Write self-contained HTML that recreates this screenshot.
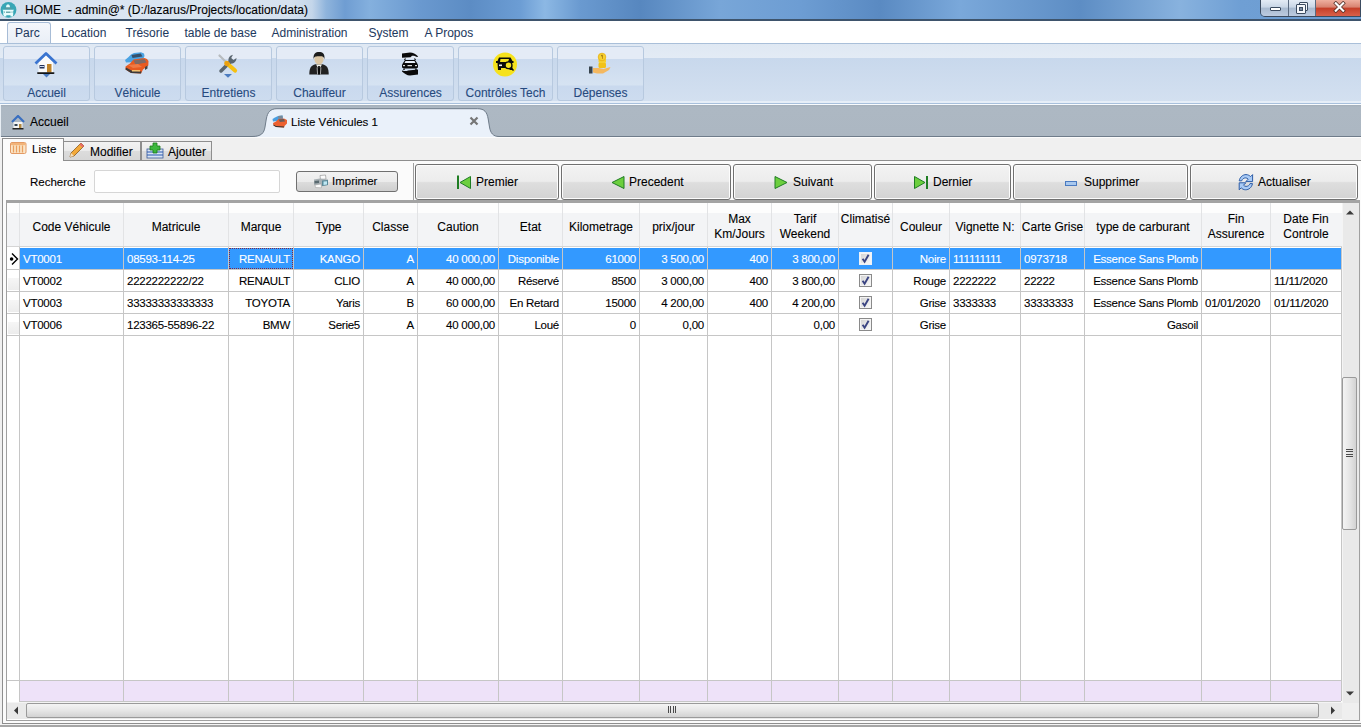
<!DOCTYPE html>
<html><head><meta charset="utf-8">
<style>
*{margin:0;padding:0;box-sizing:border-box}
html,body{width:1361px;height:727px;overflow:hidden;background:#f0f0f0;font-family:"Liberation Sans",sans-serif;font-size:11.5px;color:#000;-webkit-text-stroke:0.1px}
.a{position:absolute}
.t{position:absolute;white-space:nowrap;line-height:14px}
/* title bar */
#title{left:0;top:0;width:1361px;height:21px;background:linear-gradient(90deg,#d2dfec 0px,#dbe6f2 120px,#d6e2ef 290px,#c4d6ea 312px,#8fb4dc 326px,#6f9dd2 345px,#84b0de 370px,#6a99cf 420px,#5c8cc4 470px,#6c9dd4 520px,#8cb8e4 545px,#6a9ad0 580px,#5787bf 640px,#78a6d8 720px,#6d9dd3 800px,#5a8ac2 880px,#7aa8da 960px,#5d8dc4 1080px,#88b2de 1180px,#6f9fd4 1240px,#6b9bd0 1361px)}
#title .line{left:0;top:19px;width:1361px;height:2px;background:#3e546c}
#menu{left:0;top:21px;width:1361px;height:23px;background:#fff}
.mi{position:absolute;top:5px;font-size:12px;color:#1e3a60;line-height:14px;-webkit-text-stroke:0.05px}
#tb{left:0;top:44px;width:1361px;height:61px;background:linear-gradient(#dfe8f3 0,#e3ebf5 14px,#c8d8ec 14px,#d3e0f0 57px,#e6eef8 57px,#e6eef8 59px,#a8c0dc 59px,#a8c0dc 60px,#f8fbfe 60px)}
#tb .topline{left:0;top:-1px;width:1361px;height:1px;background:#a9bfd9}
.btn{position:absolute;top:2px;height:55px;border:1px solid #b7c9df;border-radius:3px;background:linear-gradient(#e4ebf6 0,#e4ebf6 12px,#cbdaee 12px,#d6e3f2 38px,#c9d9ee 39px,#cddcef 54px)}
.btn .lbl{position:absolute;left:0;right:0;top:39px;text-align:center;font-size:12px;color:#274a7e;line-height:14px}
.btn svg{position:absolute}
#tabs{left:0;top:105px;width:1361px;height:32px;background:linear-gradient(#a4afba 0,#adb8c3 2px,#acb7c2 100%);border-bottom:1px solid #6f7c8a}
#page{left:0;top:137px;width:1361px;height:590px;background:#f0f0f0}
.nb{border:1px solid #707070;border-radius:3px;background:linear-gradient(#f2f2f2 0,#ebebeb 50%,#dddddd 51%,#cfcfcf 100%)}

.hd{position:absolute;text-align:center;font-size:12px;line-height:15px;white-space:nowrap}
.cl,.cr,.cc{position:absolute;font-size:11.5px;letter-spacing:-0.25px;line-height:15px;white-space:nowrap}
.cl{text-align:left;padding-left:3px}
.cr{text-align:right;padding-right:3px}
.chk{width:12px;height:12px;border:1px solid #8e8f8f;background:linear-gradient(135deg,#d8d8d8,#f6f6f6)}
.chk:after{content:"";position:absolute;left:3.5px;top:0.5px;width:3px;height:7px;border:solid #3a4878;border-width:0 1.6px 1.6px 0;transform:rotate(35deg)}
.nbt{position:absolute;top:164px;height:36px;border:1px solid #707070;border-radius:3px;background:linear-gradient(#f3f3f3 0,#ececec 48%,#dedede 52%,#d3d3d3 100%);box-shadow:inset 0 0 0 1px #fcfcfc}
.nbt span{position:absolute;top:10px;font-size:12px;line-height:15px;white-space:nowrap}
</style></head><body>
<div id="title" class="a">
  <svg class="a" style="left:0;top:1px" width="18" height="18" viewBox="0 0 18 18"><circle cx="8.5" cy="8.8" r="7.9" fill="#38a6b6"/><path d="M6 6.5 C6 4 7 3.5 8 3.5 C9 3.5 10 4 10 6.5 Z" fill="#e8fcfc"/><path d="M4.5 8.3 L5.5 6.5 L11 6.5 L12 8.3 Z" fill="#5a9aa0"/><path d="M2.5 8.8 L14 8.8 L13.2 10 L13.2 14.2 L3.3 14.2 L3.3 10 Z" fill="#e8fcfc"/><rect x="6" y="10.5" width="4.5" height="1.5" fill="#6aa8ac"/><rect x="4" y="10.5" width="1" height="1.2" fill="#6aa8ac"/><rect x="11.5" y="10.5" width="1" height="1.2" fill="#6aa8ac"/><rect x="3.8" y="14" width="2.5" height="1.5" fill="#e8fcfc"/><rect x="10.5" y="14" width="2.5" height="1.5" fill="#e8fcfc"/></svg>
  <div class="t" style="left:25px;top:3px;font-size:12px;color:#000">HOME&nbsp; - admin@* (D:/lazarus/Projects/location/data)</div>
  <div class="line a"></div>
  <div class="a" style="left:1260px;top:0;width:101px;height:17px;border:1px solid #3b4b60;border-top:none;border-radius:0 0 0 5px;overflow:hidden">
    <div class="a" style="left:0;top:0;width:28px;height:16px;background:linear-gradient(#e3ebf5,#c9d6e6 45%,#a8bad0 50%,#bccbe0);border-right:1px solid #5a6a80"></div>
    <div class="a" style="left:28px;top:0;width:27px;height:16px;background:linear-gradient(#e3ebf5,#c9d6e6 45%,#a8bad0 50%,#bccbe0);border-right:1px solid #5a6a80"></div>
    <div class="a" style="left:55px;top:0;width:46px;height:16px;background:linear-gradient(#eeb0a0,#d88270 45%,#c43e28 50%,#d8604a)"></div>
    <div class="a" style="left:9px;top:7px;width:11px;height:4px;background:#fff;border:1px solid #3b4b60;border-radius:1px"></div>
    <div class="a" style="left:38px;top:2px;width:9px;height:9px;border:1px solid #3b4b60;background:#f4f6fa;border-radius:1px"></div>
    <div class="a" style="left:35px;top:4px;width:10px;height:10px;border:1px solid #3b4b60;background:#f4f6fa;border-radius:1px"></div>
    <div class="a" style="left:38px;top:7px;width:4px;height:4px;border:1px solid #3b4b60;background:#7a8aa0"></div>
    <svg class="a" style="left:72px;top:1px" width="13" height="12" viewBox="0 0 13 12"><path d="M2.8 2.3 L10.2 9.7 M10.2 2.3 L2.8 9.7" stroke="#4a2a22" stroke-width="3.6" stroke-linecap="square"/><path d="M2.8 2.3 L10.2 9.7 M10.2 2.3 L2.8 9.7" stroke="#fff" stroke-width="2.2" stroke-linecap="square"/></svg>
  </div>
</div>
<div id="menu" class="a">
  <div class="a" style="left:7px;top:1px;width:44px;height:22px;background:linear-gradient(#f4f7fb,#e9eef6);border:1px solid #a7bcd6;border-bottom:none;border-radius:3px 3px 0 0"></div>
  <div class="mi" style="left:15px">Parc</div>
  <div class="mi" style="left:61px">Location</div>
  <div class="mi" style="left:125.5px">Trésorie</div>
  <div class="mi" style="left:184.5px">table de base</div>
  <div class="mi" style="left:271.5px">Administration</div>
  <div class="mi" style="left:368.5px">System</div>
  <div class="mi" style="left:424.5px">A Propos</div>
</div>
<div id="tb" class="a">
  <div class="topline a"></div>
  <div class="btn" style="left:3px;width:87px"><svg class="a" style="left:26px;top:1px" width="32" height="32" viewBox="0 0 32 32"><path d="M8.5 14 L16 7.5 L23 14 V24.5 H8.5 Z" fill="#fbfbfb"/><path d="M5.5 15.5 L16 5.5 L26.5 15.5" fill="none" stroke="#3a74d0" stroke-width="2.8" stroke-linejoin="round"/><rect x="9.5" y="17" width="5" height="3.5" fill="#24325a"/><rect x="10" y="18" width="4" height="1" fill="#c8d8f0"/><rect x="17" y="16" width="4.5" height="8.5" fill="#c0842a"/><rect x="7" y="24.3" width="17.5" height="1.6" rx="0.8" fill="#151515"/><path d="M13 26 H20 L16.5 29.5 Z" fill="#4c7cc0"/></svg><div class="lbl">Accueil</div></div>
  <div class="btn" style="left:94px;width:87px"><svg class="a" style="left:26px;top:1px" width="32" height="32" viewBox="0 0 32 32"><path d="M4 12 L7 9.5 L10 6.5 L13 5 L20 4.2 L23 5.5 L23.5 8 L22.5 10.5 L15 14 L5 14.5 Z" fill="#4ba3e3"/><path d="M10.5 7 L19.8 5.5 L21.5 8.5 L11.5 10 Z" fill="#36506a"/><path d="M4.5 18.5 L9 15.5 L12.5 11.5 L23.5 10 L26 11 L27.5 13 L27.3 17.5 L22 21.5 L20 25.5 L10 25 L4.5 21.5 Z" fill="#e85a20"/><path d="M12.5 12.5 L23.5 11 L25.5 14.5 L14.5 16.5 Z" fill="#7e6a66"/><path d="M7 17 L17 16 L21 19 L12 20 Z" fill="#f07a44"/><path d="M4.5 21.5 L10 25 L20 25.5 L20.5 23.5 L10.5 22.5 L5 19.5 Z" fill="#3a3a3a"/><rect x="11" y="22" width="8" height="1.5" fill="#f2c070"/><path d="M24 19 L26.5 17.5 L26.5 20.5 L24 22 Z" fill="#444"/></svg><div class="lbl">Véhicule</div></div>
  <div class="btn" style="left:185px;width:87px"><svg class="a" style="left:26px;top:1px" width="32" height="32" viewBox="0 0 32 32"><path d="M7.5 7.5 L14.5 14.5" stroke="#b8bcc0" stroke-width="2.2" stroke-linecap="round"/><path d="M9 23 L18 14" stroke="#5a6670" stroke-width="3.5" stroke-linecap="round"/><path d="M17 15 C15.5 11.5 17 7.5 21 6.8 L19.2 10 L21.5 12 L24.5 10 C24.5 13.5 21.5 16 18.5 15.5 Z" fill="#5a6670"/><path d="M14.5 15 L23 22.5" stroke="#f6c010" stroke-width="4.2" stroke-linecap="round"/><circle cx="15" cy="15.5" r="2.6" fill="#eba010"/><path d="M12 26 H20 L16 29.8 Z" fill="#4c7cc0"/></svg><div class="lbl">Entretiens</div></div>
  <div class="btn" style="left:276px;width:87px"><svg class="a" style="left:26px;top:1px" width="32" height="32" viewBox="0 0 32 32"><path d="M6.3 26.5 C6.3 20 8 17.5 12.5 16.3 L19.5 16.3 C24 17.5 25.7 20 25.7 26.5 Z" fill="#222"/><path d="M13 16.5 L16 21.5 L19 16.5 Z" fill="#f2f2ec"/><path d="M15.2 18 L16.8 18 L17.3 26.5 L14.7 26.5 Z" fill="#080808"/><path d="M14.1 19.5 L14.6 26.5 M17.9 19.5 L17.4 26.5" stroke="#e0e0e0" stroke-width="0.7"/><ellipse cx="16" cy="11.3" rx="4.6" ry="5.3" fill="#dbc6a4"/><path d="M10.6 11.5 C10 5.5 12.8 4 16 4 C19.5 4 22.2 5.5 21.4 11.5 C21 8.8 19.8 8.2 16 8.3 C12.2 8.2 11 8.8 10.6 11.5 Z" fill="#1c1c1c"/></svg><div class="lbl">Chauffeur</div></div>
  <div class="btn" style="left:367px;width:87px"><svg class="a" style="left:26px;top:1px" width="32" height="32" viewBox="0 0 32 32"><path d="M8 5.5 L16 4.5 C19 4.5 21.5 5.8 24.2 8.5 L23 9 C21 8 19.5 7.5 18 7.8 L16.5 9.2 L8 9.8 Z" fill="#0a0a0a"/><path d="M10.5 12 L11.5 10.5 M20.5 10.5 L21.5 12" stroke="#0a0a0a" stroke-width="1.2"/><path d="M9 15 L11 12 L21 12 L23 15 L24 17 L24 19.5 L22 20.5 L10 20.5 L8 19.5 L8 17 Z" fill="#0a0a0a"/><path d="M11.5 13 L20.5 13 L21.5 15 L10.5 15 Z" fill="#e8eef8"/><rect x="9" y="17" width="2" height="1.2" fill="#ddd"/><rect x="13.5" y="17" width="4.5" height="1.2" fill="#ddd"/><rect x="21" y="17" width="2" height="1.2" fill="#ddd"/><path d="M10 20.5 L10 22 M22 20.5 L22 22" stroke="#0a0a0a" stroke-width="1.4"/><path d="M8 22.5 C10.5 23 12.5 23.5 14 22.5 L24 21.5 L24 26.5 L16 27.5 C13 27.5 10.5 25.5 8 23.5 Z" fill="#0a0a0a"/></svg><div class="lbl">Assurences</div></div>
  <div class="btn" style="left:458px;width:95px"><svg class="a" style="left:30px;top:1px" width="32" height="32" viewBox="0 0 32 32"><circle cx="16" cy="16.5" r="12" fill="#f6e21c"/><path d="M10 9.5 L21.5 9.5 L23.5 13 L24.5 13 L24.5 15 L23 15 L23.5 22 L20.5 22 L20.5 20 L12 20 L12 22 L9 22 L8.5 15 L7 15 L7 13 L8.5 13 Z" fill="#0a0a0a"/><path d="M11.5 11 L20 11 L19 14 L11 14 Z" fill="#f6e21c"/><rect x="10" y="16.5" width="3" height="1.6" fill="#eee"/><circle cx="19.5" cy="17.3" r="3.4" fill="#f6e21c" stroke="#0a0a0a" stroke-width="1.3"/><path d="M22 19.8 L24.5 22.5" stroke="#0a0a0a" stroke-width="1.5"/></svg><div class="lbl">Contrôles Tech</div></div>
  <div class="btn" style="left:557px;width:87px"><svg class="a" style="left:26px;top:1px" width="32" height="32" viewBox="0 0 32 32"><rect x="5" y="18.5" width="3.5" height="7" fill="#38444e"/><path d="M9 20 L15 20 L19.5 21 L26.5 19 L25 22 L19 25.5 L13 25.5 L9 24.5 Z" fill="#f4b860"/><rect x="14.5" y="14.5" width="7.5" height="5.5" rx="1.5" fill="#f2c218"/><rect x="14.5" y="10.5" width="7.5" height="4.5" rx="1.5" fill="#f6d030"/><circle cx="18" cy="9" r="3.8" fill="#f6d030" stroke="#e8b010" stroke-width="0.8"/><path d="M17.5 7 L18.5 7 L18.5 11" stroke="#c89010" stroke-width="0.8"/></svg><div class="lbl">Dépenses</div></div>
</div>
<div id="tabs" class="a">
  <div class="a" style="left:0;top:0;width:1px;height:32px;background:#e8eef4"></div>
  <svg class="a" style="left:11px;top:10px" width="14" height="15" viewBox="0 0 14 15"><path d="M1 7 L7 1 L13 7" fill="none" stroke="#3a6fc0" stroke-width="2.2"/><rect x="2.5" y="7" width="9" height="6" fill="#f4f4f4"/><rect x="3.5" y="9" width="3" height="2" fill="#345"/><rect x="8" y="9" width="2.5" height="4" fill="#b08840"/><rect x="1.5" y="13" width="11" height="1.5" fill="#222"/></svg>
  <div class="t" style="left:30px;top:10px;font-size:12px">Accueil</div>
  <svg class="a" style="left:240px;top:0" width="270" height="32" viewBox="0 0 270 32"><path d="M0 32 L0 31.5 L12 31.5 C21.5 31.5 24 28 25 22 L26.3 14 C27.5 7 30.5 3.7 37 3.7 L237.5 3.7 C244.5 3.7 247 7 248.2 14 L249.5 22 C250.5 28 253 31.5 259 31.5 L270 31.5 L270 32 Z" fill="#eaf1fa"/><path d="M0 31.5 L12 31.5 C21.5 31.5 24 28 25 22 L26.3 14 C27.5 7 30.5 3.7 37 3.7 L237.5 3.7 C244.5 3.7 247 7 248.2 14 L249.5 22 C250.5 28 253 31.5 259 31.5 L270 31.5" fill="none" stroke="#6f7c8a" stroke-width="1"/></svg>
  <svg class="a" style="left:272px;top:9px" width="16" height="16" viewBox="0 0 16 16"><path d="M0.5 5 L3 3.5 L6 2 L10.5 1.5 L11 5 L6 7 L1 7.5 Z" fill="#4a9ee0"/><path d="M6 2 L10.5 1.5 L10.8 4.5 L6.5 5 Z" fill="#7a8a98"/><path d="M1 9 L4 7.5 L6.5 5 L12 4.5 L15 6 L15 9.5 L12.5 12 L12 13.5 L4 13 L1.5 11.5 Z" fill="#ec6030"/><path d="M6.5 5.5 L12 5 L13 7.5 L8 8 Z" fill="#6a5a58"/><path d="M1.5 11.5 L4 13 L12 13.5 L12.3 12.5 L4 12 L1.5 10.5 Z" fill="#333"/></svg>
  <div class="t" style="left:291px;top:10px;font-size:11.5px">Liste Véhicules 1</div>
  <svg class="a" style="left:469px;top:11px" width="10" height="10" viewBox="0 0 10 10"><path d="M1.5 1.5 L8.5 8.5 M8.5 1.5 L1.5 8.5" stroke="#767676" stroke-width="2.2"/></svg>
</div>
<div id="page" class="a">
  <div class="a" style="left:0;top:0;width:1361px;height:1px;background:#fcfcfc"></div>
  <!-- subtabs -->
  <div class="a" style="left:63px;top:4px;width:78px;height:20px;border:1px solid #8e8e8e;border-bottom:none;background:linear-gradient(#f2f2f2,#ebebeb 45%,#dcdcdc 50%,#d6d6d6)"></div>
  <div class="a" style="left:141px;top:4px;width:71px;height:20px;border:1px solid #8e8e8e;border-bottom:none;background:linear-gradient(#f2f2f2,#ebebeb 45%,#dcdcdc 50%,#d6d6d6)"></div>
  <div class="a" style="left:2px;top:23px;width:1362px;height:564px;border:1px solid #8e8e8e;background:#fbfbfb"></div><div class="a" style="left:0;top:587px;width:1361px;height:1px;background:#f4f4f4"></div><div class="a" style="left:0;top:588px;width:1361px;height:2px;background:#a6a6a6"></div>
  <div class="a" style="left:2px;top:1px;width:62px;height:23px;border:1px solid #8e8e8e;border-bottom:none;background:#fbfbfb"></div>
  <svg class="a" style="left:10px;top:5px" width="17" height="12" viewBox="0 0 17 12"><rect x="0.5" y="0.5" width="15.5" height="11" rx="1.5" fill="#fbe6c8" stroke="#e39a64"/><rect x="1" y="1" width="14.5" height="2.2" fill="#f2b47a"/><path d="M3.5 3.5 V10.5 M6.5 3.5 V10.5 M9.5 3.5 V10.5 M12.5 3.5 V10.5" stroke="#eaa060" stroke-width="1.3"/></svg>
  <div class="t" style="left:32px;top:5px;font-size:11.5px">Liste</div>
  <svg class="a" style="left:68px;top:5px" width="17" height="17" viewBox="0 0 17 17"><path d="M2 15 L3 11 L13 1 L16 4 L6 14 Z" fill="#f2a93a" stroke="#8a5a20" stroke-width="0.8"/><path d="M13 1 L16 4 L14.5 5.5 L11.5 2.5 Z" fill="#e86a6a"/><path d="M2 15 L3 11 L6 14 Z" fill="#f4e0c0"/></svg>
  <div class="t" style="left:90px;top:8px;font-size:12px">Modifier</div>
  <svg class="a" style="left:146px;top:5px" width="18" height="17" viewBox="0 0 18 17"><rect x="1" y="7" width="16" height="9" fill="#d9e4f4" stroke="#3a5a9a" stroke-width="0.8"/><path d="M1 10 H17 M1 13 H17" stroke="#2a58b0" stroke-width="1.2"/><path d="M7 1 H11 V4 H14 V8 H11 V11 H7 V8 H4 V4 H7 Z" fill="#3cb83c" stroke="#1a7a1a" stroke-width="0.8"/></svg>
  <div class="t" style="left:168px;top:8px;font-size:12px">Ajouter</div>
  <!-- search row -->
  <div class="t" style="left:30px;top:38px;font-size:11.5px">Recherche</div>
  <div class="a" style="left:94px;top:33px;width:186px;height:23px;border:1px solid #d6d6d6;border-radius:2px;background:#fff"></div>
  <div class="a nb" style="left:296px;top:34px;width:102px;height:21px"></div>
  <svg class="a" style="left:313px;top:37px" width="16" height="15" viewBox="0 0 16 15"><path d="M7 1.5 L12.5 1 L13 5 L7.5 5.5 Z" fill="#fafafa" stroke="#8a8a8a" stroke-width="0.6"/><path d="M1 5.5 L7 4.5 L15 5.5 L15 11 L8 12.5 L1 11 Z" fill="#a8b0b4"/><path d="M9 6.5 L15 6 L15 11 L9 12 Z" fill="#5a8a9a"/><path d="M10.5 7.5 L14 7.2 L14 10.5 L10.5 11 Z" fill="#bfe8f4"/><path d="M2 11 L8 10 L8.5 13.8 L2.5 13.5 Z" fill="#fbfbfb" stroke="#999" stroke-width="0.5"/><path d="M1.5 7 L6 6.5 L6 9 L1.5 9.5 Z" fill="#5a6a70"/></svg><div class="t" style="left:332px;top:37px;font-size:11.5px">Imprimer</div>
  <div class="a" style="left:413px;top:26px;width:1px;height:38px;background:#a0a0a0"></div>
</div>

<div class="nbt" style="left:415px;width:144px"><svg class="a" style="left:40px;top:10px" width="16" height="15" viewBox="0 0 16 15"><rect x="1" y="0.5" width="2" height="13.5" fill="#1f7d23"/><path d="M14.5 1.5 L4 7.5 L14.5 13.5 Z" fill="#6ccf3e" stroke="#1f7d23" stroke-width="1"/></svg><span style="left:60px">Premier</span></div>
<div class="nbt" style="left:561px;width:170px"><svg class="a" style="left:48px;top:10px" width="16" height="15" viewBox="0 0 16 15"><path d="M14 1.5 L2 7.5 L14 13.5 Z" fill="#6ccf3e" stroke="#1f7d23" stroke-width="1"/></svg><span style="left:67px">Precedent</span></div>
<div class="nbt" style="left:733px;width:139px"><svg class="a" style="left:39px;top:10px" width="16" height="15" viewBox="0 0 16 15"><path d="M2 1.5 L14 7.5 L2 13.5 Z" fill="#6ccf3e" stroke="#1f7d23" stroke-width="1"/></svg><span style="left:59px">Suivant</span></div>
<div class="nbt" style="left:874px;width:137px"><svg class="a" style="left:38px;top:10px" width="16" height="15" viewBox="0 0 16 15"><path d="M1.5 1.5 L12 7.5 L1.5 13.5 Z" fill="#6ccf3e" stroke="#1f7d23" stroke-width="1"/><rect x="13" y="1" width="2" height="13" fill="#1f7d23"/></svg><span style="left:58px">Dernier</span></div>
<div class="nbt" style="left:1013px;width:175px"><div class="a" style="left:51px;top:16px;width:12px;height:5px;background:#a8c8ee;border:1px solid #4a7ac0"></div><span style="left:70px">Supprimer</span></div>
<div class="nbt" style="left:1190px;width:168px"><svg class="a" style="left:46px;top:8px" width="17" height="18" viewBox="0 0 17 18"><path d="M2.2 7.8 C3 3.8 6 1.6 9 1.6 C11 1.6 12.5 2.5 13.6 3.6 L15.6 1.6 L15.6 8.6 L8.8 8.6 L11.2 6.2 C10.4 5.3 9.5 4.9 8.6 4.9 C6.8 4.9 5.3 5.9 4.7 7.8 Z" fill="#a9cbf6" stroke="#2d5ca6" stroke-width="1"/><path d="M2.2 9.8 L8.9 9.8 L6.5 12.2 C7.3 13 8.2 13.4 9.1 13.4 C10.9 13.4 12.4 12.4 13 10.6 L15.5 10.6 C14.7 14.6 11.7 16.8 8.7 16.8 C6.7 16.8 5.2 15.9 4.2 14.8 L2.2 16.8 Z" fill="#a9cbf6" stroke="#2d5ca6" stroke-width="1"/></svg><span style="left:67px">Actualiser</span></div>
<!--GRID-->
<svg width="0" height="0" style="position:absolute"><defs><linearGradient id="cg" x1="0" y1="0" x2="1" y2="1"><stop offset="0" stop-color="#d4d4d4"/><stop offset="1" stop-color="#f8f8f8"/></linearGradient></defs></svg>
<div class="a" style="left:6px;top:200px;width:1354px;height:521px;border:1px solid #a0a0a0;border-top:3px solid #a3a3a3;background:#fff"></div>
<div class="a" style="left:7px;top:203px;width:1335px;height:44px;background:linear-gradient(#fdfdfd 0,#fdfdfd 10px,#f3f4f6 10px,#f3f4f6 43px)"></div>
<div class="a" style="left:7px;top:246px;width:1335px;height:1px;background:#d5d5d5"></div>
<div class="a" style="left:7px;top:247px;width:12px;height:454px;background:#fff"></div>
<div class="a" style="left:20px;top:681px;width:1321px;height:20px;background:#eee2f9"></div>
<div class="a" style="left:20px;top:248px;width:1321px;height:21px;background:#3399ff"></div>
<div class="a" style="left:19px;top:203px;width:1px;height:43px;background:#e2e3e5"></div>
<div class="a" style="left:123px;top:203px;width:1px;height:43px;background:#e2e3e5"></div>
<div class="a" style="left:228px;top:203px;width:1px;height:43px;background:#e2e3e5"></div>
<div class="a" style="left:293px;top:203px;width:1px;height:43px;background:#e2e3e5"></div>
<div class="a" style="left:363px;top:203px;width:1px;height:43px;background:#e2e3e5"></div>
<div class="a" style="left:417px;top:203px;width:1px;height:43px;background:#e2e3e5"></div>
<div class="a" style="left:498px;top:203px;width:1px;height:43px;background:#e2e3e5"></div>
<div class="a" style="left:562px;top:203px;width:1px;height:43px;background:#e2e3e5"></div>
<div class="a" style="left:639px;top:203px;width:1px;height:43px;background:#e2e3e5"></div>
<div class="a" style="left:707px;top:203px;width:1px;height:43px;background:#e2e3e5"></div>
<div class="a" style="left:771px;top:203px;width:1px;height:43px;background:#e2e3e5"></div>
<div class="a" style="left:838px;top:203px;width:1px;height:43px;background:#e2e3e5"></div>
<div class="a" style="left:892px;top:203px;width:1px;height:43px;background:#e2e3e5"></div>
<div class="a" style="left:949px;top:203px;width:1px;height:43px;background:#e2e3e5"></div>
<div class="a" style="left:1020px;top:203px;width:1px;height:43px;background:#e2e3e5"></div>
<div class="a" style="left:1084px;top:203px;width:1px;height:43px;background:#e2e3e5"></div>
<div class="a" style="left:1201px;top:203px;width:1px;height:43px;background:#e2e3e5"></div>
<div class="a" style="left:1270px;top:203px;width:1px;height:43px;background:#e2e3e5"></div>
<div class="a" style="left:19px;top:247px;width:1px;height:454px;background:#c6c6c6"></div>
<div class="a" style="left:123px;top:247px;width:1px;height:454px;background:#c6c6c6"></div>
<div class="a" style="left:228px;top:247px;width:1px;height:454px;background:#c6c6c6"></div>
<div class="a" style="left:293px;top:247px;width:1px;height:454px;background:#c6c6c6"></div>
<div class="a" style="left:363px;top:247px;width:1px;height:454px;background:#c6c6c6"></div>
<div class="a" style="left:417px;top:247px;width:1px;height:454px;background:#c6c6c6"></div>
<div class="a" style="left:498px;top:247px;width:1px;height:454px;background:#c6c6c6"></div>
<div class="a" style="left:562px;top:247px;width:1px;height:454px;background:#c6c6c6"></div>
<div class="a" style="left:639px;top:247px;width:1px;height:454px;background:#c6c6c6"></div>
<div class="a" style="left:707px;top:247px;width:1px;height:454px;background:#c6c6c6"></div>
<div class="a" style="left:771px;top:247px;width:1px;height:454px;background:#c6c6c6"></div>
<div class="a" style="left:838px;top:247px;width:1px;height:454px;background:#c6c6c6"></div>
<div class="a" style="left:892px;top:247px;width:1px;height:454px;background:#c6c6c6"></div>
<div class="a" style="left:949px;top:247px;width:1px;height:454px;background:#c6c6c6"></div>
<div class="a" style="left:1020px;top:247px;width:1px;height:454px;background:#c6c6c6"></div>
<div class="a" style="left:1084px;top:247px;width:1px;height:454px;background:#c6c6c6"></div>
<div class="a" style="left:1201px;top:247px;width:1px;height:454px;background:#c6c6c6"></div>
<div class="a" style="left:1270px;top:247px;width:1px;height:454px;background:#c6c6c6"></div>
<div class="a" style="left:1341px;top:247px;width:1px;height:454px;background:#c6c6c6"></div>
<div class="a" style="left:7px;top:269px;width:1334px;height:1px;background:#c6c6c6"></div>
<div class="a" style="left:7px;top:291px;width:1334px;height:1px;background:#c6c6c6"></div>
<div class="a" style="left:7px;top:313px;width:1334px;height:1px;background:#c6c6c6"></div>
<div class="a" style="left:7px;top:335px;width:1334px;height:1px;background:#c6c6c6"></div>
<div class="a" style="left:7px;top:680px;width:1334px;height:1px;background:#c6c6c6"></div>
<div class="a" style="left:19px;top:701px;width:1322px;height:1px;background:#c6c6c6"></div>
<div class="a" style="left:8px;top:278px;width:11px;height:12px;background:linear-gradient(#f6f6f6,#ececec)"></div>
<div class="a" style="left:8px;top:300px;width:11px;height:12px;background:linear-gradient(#f6f6f6,#ececec)"></div>
<div class="a" style="left:8px;top:322px;width:11px;height:12px;background:linear-gradient(#f6f6f6,#ececec)"></div>
<div class="hd" style="left:20px;top:220px;width:103px">Code Véhicule</div>
<div class="hd" style="left:124px;top:220px;width:104px">Matricule</div>
<div class="hd" style="left:229px;top:220px;width:64px">Marque</div>
<div class="hd" style="left:294px;top:220px;width:69px">Type</div>
<div class="hd" style="left:364px;top:220px;width:53px">Classe</div>
<div class="hd" style="left:418px;top:220px;width:80px">Caution</div>
<div class="hd" style="left:499px;top:220px;width:63px">Etat</div>
<div class="hd" style="left:563px;top:220px;width:76px">Kilometrage</div>
<div class="hd" style="left:640px;top:220px;width:67px">prix/jour</div>
<div class="hd" style="left:708px;top:212px;width:63px">Max<br>Km/Jours</div>
<div class="hd" style="left:772px;top:212px;width:66px">Tarif<br>Weekend</div>
<div class="hd" style="left:839px;top:212px;width:53px">Climatisé</div>
<div class="hd" style="left:893px;top:220px;width:56px">Couleur</div>
<div class="hd" style="left:950px;top:220px;width:70px">Vignette N:</div>
<div class="hd" style="left:1021px;top:220px;width:63px">Carte Grise</div>
<div class="hd" style="left:1085px;top:220px;width:116px">type de carburant</div>
<div class="hd" style="left:1202px;top:212px;width:68px">Fin<br>Assurence</div>
<div class="hd" style="left:1271px;top:212px;width:70px">Date Fin<br>Controle</div>
<div class="cl" style="left:20px;top:252px;width:103px;color:#fff;">VT0001</div>
<div class="cl" style="left:124px;top:252px;width:104px;color:#fff;">08593-114-25</div>
<div class="cr" style="left:229px;top:252px;width:64px;color:#fff;">RENAULT</div>
<div class="cr" style="left:294px;top:252px;width:69px;color:#fff;">KANGO</div>
<div class="cr" style="left:364px;top:252px;width:53px;color:#fff;">A</div>
<div class="cr" style="left:418px;top:252px;width:80px;color:#fff;">40 000,00</div>
<div class="cr" style="left:499px;top:252px;width:63px;color:#fff;">Disponible</div>
<div class="cr" style="left:563px;top:252px;width:76px;color:#fff;">61000</div>
<div class="cr" style="left:640px;top:252px;width:67px;color:#fff;">3 500,00</div>
<div class="cr" style="left:708px;top:252px;width:63px;color:#fff;">400</div>
<div class="cr" style="left:772px;top:252px;width:66px;color:#fff;">3 800,00</div>
<svg class="a" style="left:859px;top:252px" width="13" height="13" viewBox="0 0 13 13"><rect x="0.5" y="0.5" width="12" height="12" fill="#f4f4f4" stroke="#eef2f8"/><rect x="2" y="2" width="9" height="9" fill="url(#cg)"/><path d="M3.6 6.8 L5.6 9.8 L9.6 2.8" fill="none" stroke="#3a4482" stroke-width="1.9"/></svg>
<div class="cr" style="left:893px;top:252px;width:56px;color:#fff;">Noire</div>
<div class="cl" style="left:950px;top:252px;width:70px;color:#fff;">111111111</div>
<div class="cl" style="left:1021px;top:252px;width:63px;color:#fff;">0973718</div>
<div class="cr" style="left:1085px;top:252px;width:116px;color:#fff;">Essence Sans Plomb</div>
<div class="cl" style="left:20px;top:274px;width:103px;">VT0002</div>
<div class="cl" style="left:124px;top:274px;width:104px;">2222222222/22</div>
<div class="cr" style="left:229px;top:274px;width:64px;">RENAULT</div>
<div class="cr" style="left:294px;top:274px;width:69px;">CLIO</div>
<div class="cr" style="left:364px;top:274px;width:53px;">A</div>
<div class="cr" style="left:418px;top:274px;width:80px;">40 000,00</div>
<div class="cr" style="left:499px;top:274px;width:63px;">Réservé</div>
<div class="cr" style="left:563px;top:274px;width:76px;">8500</div>
<div class="cr" style="left:640px;top:274px;width:67px;">3 000,00</div>
<div class="cr" style="left:708px;top:274px;width:63px;">400</div>
<div class="cr" style="left:772px;top:274px;width:66px;">3 800,00</div>
<svg class="a" style="left:859px;top:274px" width="13" height="13" viewBox="0 0 13 13"><rect x="0.5" y="0.5" width="12" height="12" fill="#f4f4f4" stroke="#8a8a8a"/><rect x="2" y="2" width="9" height="9" fill="url(#cg)"/><path d="M3.6 6.8 L5.6 9.8 L9.6 2.8" fill="none" stroke="#3a4482" stroke-width="1.9"/></svg>
<div class="cr" style="left:893px;top:274px;width:56px;">Rouge</div>
<div class="cl" style="left:950px;top:274px;width:70px;">2222222</div>
<div class="cl" style="left:1021px;top:274px;width:63px;">22222</div>
<div class="cr" style="left:1085px;top:274px;width:116px;">Essence Sans Plomb</div>
<div class="cl" style="left:1271px;top:274px;width:70px;">11/11/2020</div>
<div class="cl" style="left:20px;top:296px;width:103px;">VT0003</div>
<div class="cl" style="left:124px;top:296px;width:104px;">33333333333333</div>
<div class="cr" style="left:229px;top:296px;width:64px;">TOYOTA</div>
<div class="cr" style="left:294px;top:296px;width:69px;">Yaris</div>
<div class="cr" style="left:364px;top:296px;width:53px;">B</div>
<div class="cr" style="left:418px;top:296px;width:80px;">60 000,00</div>
<div class="cr" style="left:499px;top:296px;width:63px;">En Retard</div>
<div class="cr" style="left:563px;top:296px;width:76px;">15000</div>
<div class="cr" style="left:640px;top:296px;width:67px;">4 200,00</div>
<div class="cr" style="left:708px;top:296px;width:63px;">400</div>
<div class="cr" style="left:772px;top:296px;width:66px;">4 200,00</div>
<svg class="a" style="left:859px;top:296px" width="13" height="13" viewBox="0 0 13 13"><rect x="0.5" y="0.5" width="12" height="12" fill="#f4f4f4" stroke="#8a8a8a"/><rect x="2" y="2" width="9" height="9" fill="url(#cg)"/><path d="M3.6 6.8 L5.6 9.8 L9.6 2.8" fill="none" stroke="#3a4482" stroke-width="1.9"/></svg>
<div class="cr" style="left:893px;top:296px;width:56px;">Grise</div>
<div class="cl" style="left:950px;top:296px;width:70px;">3333333</div>
<div class="cl" style="left:1021px;top:296px;width:63px;">33333333</div>
<div class="cr" style="left:1085px;top:296px;width:116px;">Essence Sans Plomb</div>
<div class="cl" style="left:1202px;top:296px;width:68px;">01/01/2020</div>
<div class="cl" style="left:1271px;top:296px;width:70px;">01/11/2020</div>
<div class="cl" style="left:20px;top:318px;width:103px;">VT0006</div>
<div class="cl" style="left:124px;top:318px;width:104px;">123365-55896-22</div>
<div class="cr" style="left:229px;top:318px;width:64px;">BMW</div>
<div class="cr" style="left:294px;top:318px;width:69px;">Serie5</div>
<div class="cr" style="left:364px;top:318px;width:53px;">A</div>
<div class="cr" style="left:418px;top:318px;width:80px;">40 000,00</div>
<div class="cr" style="left:499px;top:318px;width:63px;">Loué</div>
<div class="cr" style="left:563px;top:318px;width:76px;">0</div>
<div class="cr" style="left:640px;top:318px;width:67px;">0,00</div>
<div class="cr" style="left:772px;top:318px;width:66px;">0,00</div>
<svg class="a" style="left:859px;top:318px" width="13" height="13" viewBox="0 0 13 13"><rect x="0.5" y="0.5" width="12" height="12" fill="#f4f4f4" stroke="#8a8a8a"/><rect x="2" y="2" width="9" height="9" fill="url(#cg)"/><path d="M3.6 6.8 L5.6 9.8 L9.6 2.8" fill="none" stroke="#3a4482" stroke-width="1.9"/></svg>
<div class="cr" style="left:893px;top:318px;width:56px;">Grise</div>
<div class="cr" style="left:1085px;top:318px;width:116px;">Gasoil</div>
<div class="a" style="left:229px;top:248px;width:64px;height:21px;border:1px dotted #7a2a4a"></div>
<svg class="a" style="left:9px;top:252px" width="10" height="14" viewBox="0 0 10 14"><circle cx="2.6" cy="7" r="1.8" fill="#000"/><path d="M3 1.5 L8.5 7 L3 12.5" fill="none" stroke="#000" stroke-width="1.4"/></svg>
<!--/GRID-->
<!--SB-->
<div class="a" style="left:1342px;top:203px;width:17px;height:500px;background:#e9e9e9;border-left:1px solid #f4f4f4"></div>
<svg class="a" style="left:1345px;top:209px" width="10" height="7" viewBox="0 0 10 7"><path d="M1 5.5 L5 1.5 L9 5.5 Z" fill="#3a3a3a"/></svg>
<svg class="a" style="left:1345px;top:690px" width="10" height="7" viewBox="0 0 10 7"><path d="M1 1.5 L5 5.5 L9 1.5 Z" fill="#3a3a3a"/></svg>
<div class="a" style="left:1342px;top:377px;width:15px;height:153px;border:1px solid #9a9a9a;border-radius:2px;background:linear-gradient(90deg,#f4f4f4,#e6e6e6 50%,#d2d2d2 100%)"></div>
<div class="a" style="left:1346px;top:449px;width:7px;height:8px;background:repeating-linear-gradient(#4a4a4a 0,#4a4a4a 1px,transparent 1px,transparent 2.5px)"></div>
<div class="a" style="left:7px;top:702px;width:1335px;height:17px;background:#e9e9e9;border-top:1px solid #f4f4f4"></div>
<svg class="a" style="left:12px;top:705px" width="8" height="11" viewBox="0 0 8 11"><path d="M6 1.5 L2 5.5 L6 9.5 Z" fill="#3a3a3a"/></svg>
<svg class="a" style="left:1329px;top:705px" width="8" height="11" viewBox="0 0 8 11"><path d="M2 1.5 L6 5.5 L2 9.5 Z" fill="#3a3a3a"/></svg>
<div class="a" style="left:26px;top:703px;width:1293px;height:15px;border:1px solid #9a9a9a;border-radius:2px;background:linear-gradient(#f4f4f4,#e6e6e6 50%,#d2d2d2 100%)"></div>
<div class="a" style="left:668px;top:706px;width:8px;height:7px;background:repeating-linear-gradient(90deg,#4a4a4a 0,#4a4a4a 1px,transparent 1px,transparent 2.5px)"></div>
<div class="a" style="left:1342px;top:703px;width:17px;height:17px;background:#efefef"></div>
<!--/SB-->

</body></html>
